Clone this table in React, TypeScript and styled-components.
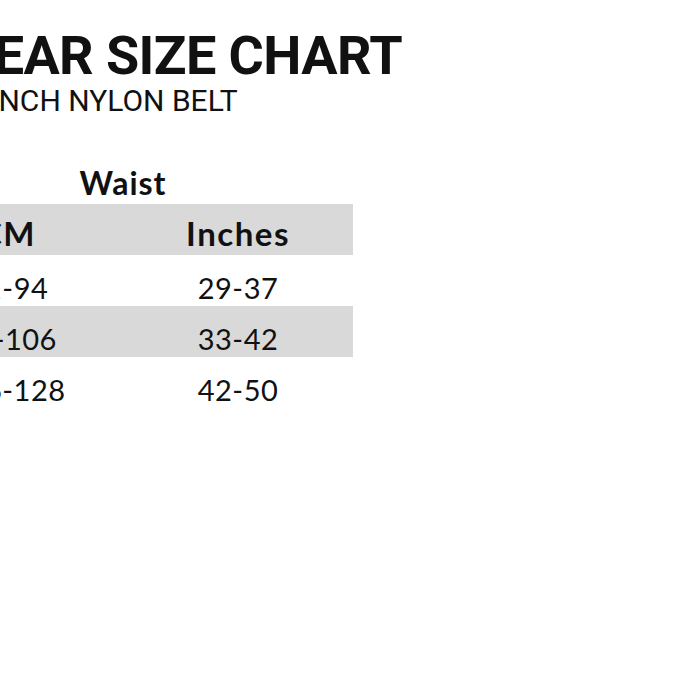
import React from 'react';
import styled, { createGlobalStyle } from 'styled-components';

const rows = [
  { cm: '71-94', inches: '29-37' },
  { cm: '81-106', inches: '33-42' },
  { cm: '106-128', inches: '42-50' },
];

const App = () => {
  return (
    <>
      <GlobalStyle />
      <Page>
        <Sheet>
          <Heading>
            <Title>WEAR SIZE CHART</Title>
            <Subtitle>1 INCH NYLON BELT</Subtitle>
          </Heading>
          <Chart>
            <Caption>Waist</Caption>
            <Table>
              <thead>
                <Row shaded>
                  <HeadCell>CM</HeadCell>
                  <HeadCell>Inches</HeadCell>
                </Row>
              </thead>
              <tbody>
                {rows.map((r, i) => (
                  <Row key={r.cm} shaded={i % 2 === 1}>
                    <Cell>{r.cm}</Cell>
                    <Cell>{r.inches}</Cell>
                  </Row>
                ))}
              </tbody>
            </Table>
          </Chart>
        </Sheet>
      </Page>
    </>
  );
};

export default App;

const GlobalStyle = createGlobalStyle`
  body {
    margin: 0;
    background: #fff;
    overflow: hidden;
  }
`;

const Page = styled.div`
  width: 700px;
  height: 700px;
  overflow: hidden;
  background: #fff;
  color: #111;
`;

const Sheet = styled.div`
  margin-left: -107px;
  padding-top: 28px;
`;

const Heading = styled.div`
  margin-left: 54px;
  font-family: Roboto, 'Liberation Sans', sans-serif;
`;

const Title = styled.h1`
  margin: 0;
  font-size: 54px;
  font-weight: 700;
  line-height: 56px;
  letter-spacing: -0.6px;
`;

const Subtitle = styled.div`
  margin-left: 19px;
  font-size: 30px;
  font-weight: 400;
  line-height: 34px;
`;

const Chart = styled.div`
  width: 460px;
  margin-top: 44px;
  font-family: Lato, 'Open Sans', sans-serif;
`;

const Caption = styled.div`
  text-align: center;
  font-size: 32px;
  font-weight: 700;
  letter-spacing: 1px;
  line-height: 42px;
`;

const Table = styled.table`
  width: 460px;
  border-collapse: collapse;
  table-layout: fixed;
`;

const Row = styled.tr<{ shaded?: boolean }>`
  height: 51px;
  background: ${(p) => (p.shaded ? '#d9d9d9' : 'transparent')};
`;

const HeadCell = styled.th`
  padding: 6px 0 0;
  text-align: center;
  font-size: 33px;
  font-weight: 700;
  letter-spacing: 1.5px;
`;

const Cell = styled.td`
  padding: 14px 0 0;
  text-align: center;
  font-size: 29px;
  font-weight: 400;
  letter-spacing: 0.5px;
`;
